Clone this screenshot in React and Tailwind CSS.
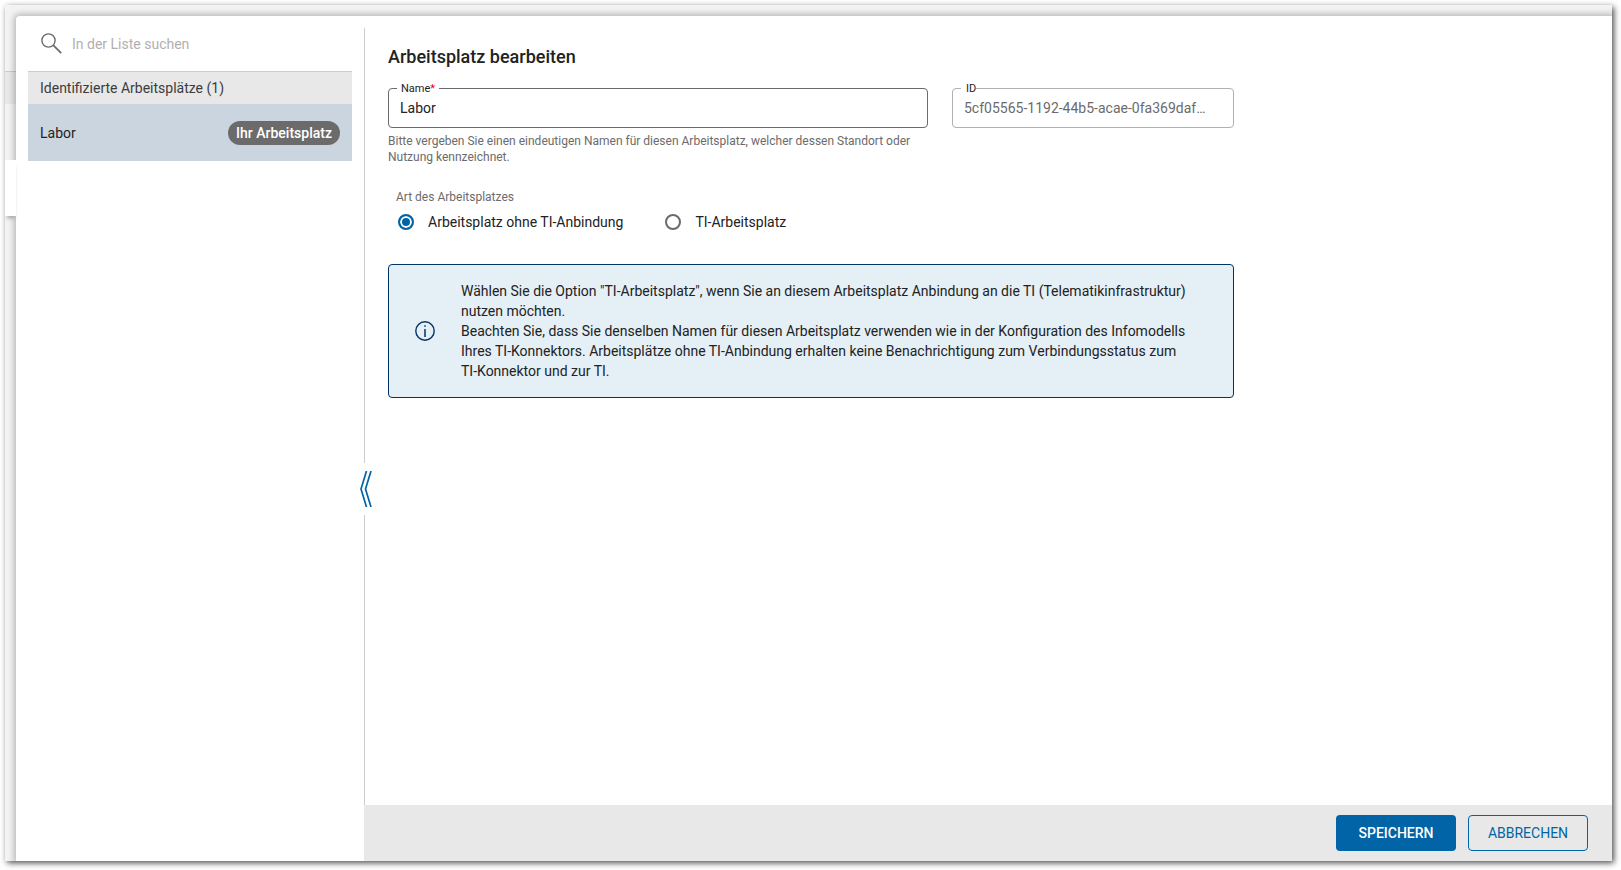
import { useState } from "react";

const workplaces = [{ id: "5cf05565-1192-44b5-acae-0fa369daf…", name: "Labor", own: true }];

const types = [
  { value: "none", label: "Arbeitsplatz ohne TI-Anbindung" },
  { value: "ti", label: "TI-Arbeitsplatz" },
];

function SearchIcon() {
  return (
    <svg width="21" height="21" viewBox="0 0 21 21" fill="none" stroke="#6b6b6b" strokeWidth="1.4" aria-hidden="true">
      <circle cx="7.5" cy="7.5" r="6.6" />
      <path d="M12.2 12.2 20.2 20.2" strokeWidth="1.8" />
    </svg>
  );
}

function InfoIcon() {
  return (
    <svg width="20" height="20" viewBox="0 0 20 20" fill="none" stroke="#003366" aria-hidden="true">
      <circle cx="10" cy="10" r="9.2" strokeWidth="1.4" />
      <path d="M10 8v8M10 4.2v1.5" strokeWidth="1.5" />
    </svg>
  );
}

function CollapseIcon() {
  return (
    <svg width="12" height="36" viewBox="0 0 12 36" fill="none" stroke="#0064a7" strokeWidth="1.7" aria-hidden="true">
      <path d="M6.5 0 1 18l5.5 18M11 0 5.500 18l5.500 18" />
    </svg>
  );
}

// Slice of the page underneath that stays visible left of the dialog
function Backdrop() {
  return (
    <div className="flex w-[11px] shrink-0 flex-col">
      <div className="h-[67px] border-b border-[#cccccc]" />
      <div className="h-8 bg-[#e8e8e8]" />
      <div className="h-14" />
      <div className="z-10 h-14 bg-white shadow-[0_4px_4px_-2px_rgba(0,0,0,0.35)]" />
    </div>
  );
}

function Sidebar() {
  const [search, setSearch] = useState("");
  const items = workplaces.filter((w) =>
    w.name.toLowerCase().includes(search.toLowerCase())
  );

  return (
    <aside className="w-[348px] shrink-0 p-3">
      <label className="flex h-11 items-center gap-2.5 border-b border-[#cccccc] pb-3 pl-[13px]">
        <SearchIcon />
        <input
          type="text"
          aria-label="In der Liste suchen"
          placeholder="In der Liste suchen"
          className="min-w-0 flex-1 outline-none placeholder:text-[#b0b0b0]"
          value={search}
          onChange={(e) => setSearch(e.target.value)}
        />
      </label>
      <h2 className="flex h-8 items-center bg-[#e8e8e8] px-3 text-[#3c3c3c]">
        Identifizierte Arbeitsplätze ({items.length})
      </h2>
      <ul>
        {items.map((w) => (
          <li key={w.id}>
            <button
              type="button"
              className="flex h-[57px] w-full items-center justify-between bg-[#cbd5e0] px-3 text-left"
            >
              <span>{w.name}</span>
              {w.own && (
                <span className="rounded-full bg-[#6b6b6b] px-2 py-0.5 font-medium text-white">
                  Ihr Arbeitsplatz
                </span>
              )}
            </button>
          </li>
        ))}
      </ul>
    </aside>
  );
}

// Divider line, interrupted by the collapse button
function Divider() {
  return (
    <div className="flex w-px flex-col items-center pt-3">
      <div className="w-px flex-[435] bg-[#cccccc]" />
      <button type="button" aria-label="Liste einklappen" className="flex h-[52px] w-[15px] items-center justify-end">
        <CollapseIcon />
      </button>
      <div className="w-px flex-[290] bg-[#cccccc]" />
    </div>
  );
}

export default function App() {
  const [name, setName] = useState("Labor");
  const [type, setType] = useState("none");

  return (
    <div className="flex h-screen bg-white pt-[5px] pr-[9px] pb-[9px] pl-[5px] font-[Roboto,sans-serif] text-sm text-[#222222]">
      <div className="flex min-w-0 flex-1 overflow-hidden bg-[#f3f3f3] shadow-[2px_2px_6px_rgba(0,0,0,0.7)]">
        <Backdrop />
        <div className="mt-[11px] flex min-w-0 flex-1 rounded-tl-[4px] bg-white shadow-[0_0_6px_2px_rgba(0,0,0,0.25)]">
          <Sidebar />
          <div className="flex min-w-0 flex-1 flex-col">
            <div className="flex min-h-0 flex-1">
              <Divider />
              <main className="min-w-0 flex-1 px-[23px] pt-[29px]">
                <form id="workplace" className="max-w-[846px]" onSubmit={(e) => e.preventDefault()}>
                  <h1 className="text-lg leading-6 font-medium">Arbeitsplatz bearbeiten</h1>

                  <div className="mt-2.5 grid grid-cols-[540fr_282fr] items-start gap-6">
                    <div className="min-w-0">
                      <fieldset className="rounded-[4px] border border-[#6b6b6b] px-[11px] pb-2">
                        <legend className="-ml-[3px] px-1 pt-0.5 text-[11px] leading-4">
                          <label htmlFor="name">
                            Name<span className="text-[#e2001a]">*</span>
                          </label>
                        </legend>
                        <input
                          id="name"
                          type="text"
                          className="block h-[22px] w-full outline-none"
                          value={name}
                          onChange={(e) => setName(e.target.value)}
                        />
                      </fieldset>
                      <p className="mt-[5px] text-xs leading-4 text-[#6b6b6b]">
                        Bitte vergeben Sie einen eindeutigen Namen für diesen Arbeitsplatz, welcher dessen Standort oder
                        Nutzung kennzeichnet.
                      </p>
                    </div>
                    <fieldset className="min-w-0 rounded-[4px] border border-[#b0b0b0] px-[11px] pb-2">
                      <legend className="-ml-[3px] pt-0.5 pl-[5px] text-[11px] leading-4">
                        <label htmlFor="id">ID</label>
                      </legend>
                      <input
                        id="id"
                        type="text"
                        readOnly
                        className="block h-[22px] w-full text-ellipsis text-[#6b6b6b] outline-none"
                        value={workplaces[0].id}
                      />
                    </fieldset>
                  </div>

                  <fieldset className="mt-6 pl-2">
                    <legend className="text-xs leading-4 text-[#6b6b6b]">Art des Arbeitsplatzes</legend>
                    <div className="mt-[7px] flex gap-10">
                      {types.map((t) => (
                        <label key={t.value} className="flex items-center gap-3.5 pl-0.5">
                          <input
                            type="radio"
                            name="type"
                            value={t.value}
                            checked={type === t.value}
                            onChange={() => setType(t.value)}
                            className="size-4 appearance-none rounded-full border-2 border-[#6b6b6b] checked:border-[#0064a7] checked:bg-[#0064a7] checked:shadow-[inset_0_0_0_2px_white]"
                          />
                          {t.label}
                        </label>
                      ))}
                    </div>
                  </fieldset>

                  <div className="mt-8 flex items-center gap-[26px] rounded-[4px] border border-[#003366] bg-[#e4eff6] py-4 pr-6 pl-[26px]">
                    <InfoIcon />
                    <p className="flex-1">
                      Wählen Sie die Option "TI-Arbeitsplatz", wenn Sie an diesem Arbeitsplatz Anbindung an die TI
                      (Telematikinfrastruktur) nutzen möchten.
                      <br />
                      Beachten Sie, dass Sie denselben Namen für diesen Arbeitsplatz verwenden wie in der Konfiguration
                      des Infomodells Ihres TI-Konnektors. Arbeitsplätze ohne TI-Anbindung erhalten keine
                      Benachrichtigung zum Verbindungsstatus zum{" "}
                      <span className="whitespace-nowrap">TI-Konnektor</span> und zur TI.
                    </p>
                  </div>
                </form>
              </main>
            </div>
            <footer className="flex h-14 items-center justify-end gap-3 bg-[#e8e8e8] px-6">
              <button
                type="submit"
                form="workplace"
                className="h-9 w-[120px] rounded-[4px] bg-[#0064a7] font-medium text-white"
              >
                SPEICHERN
              </button>
              <button
                type="button"
                className="h-9 w-[120px] rounded-[4px] border border-[#0064a7] text-[#0064a7]"
              >
                ABBRECHEN
              </button>
            </footer>
          </div>
        </div>
      </div>
    </div>
  );
}
